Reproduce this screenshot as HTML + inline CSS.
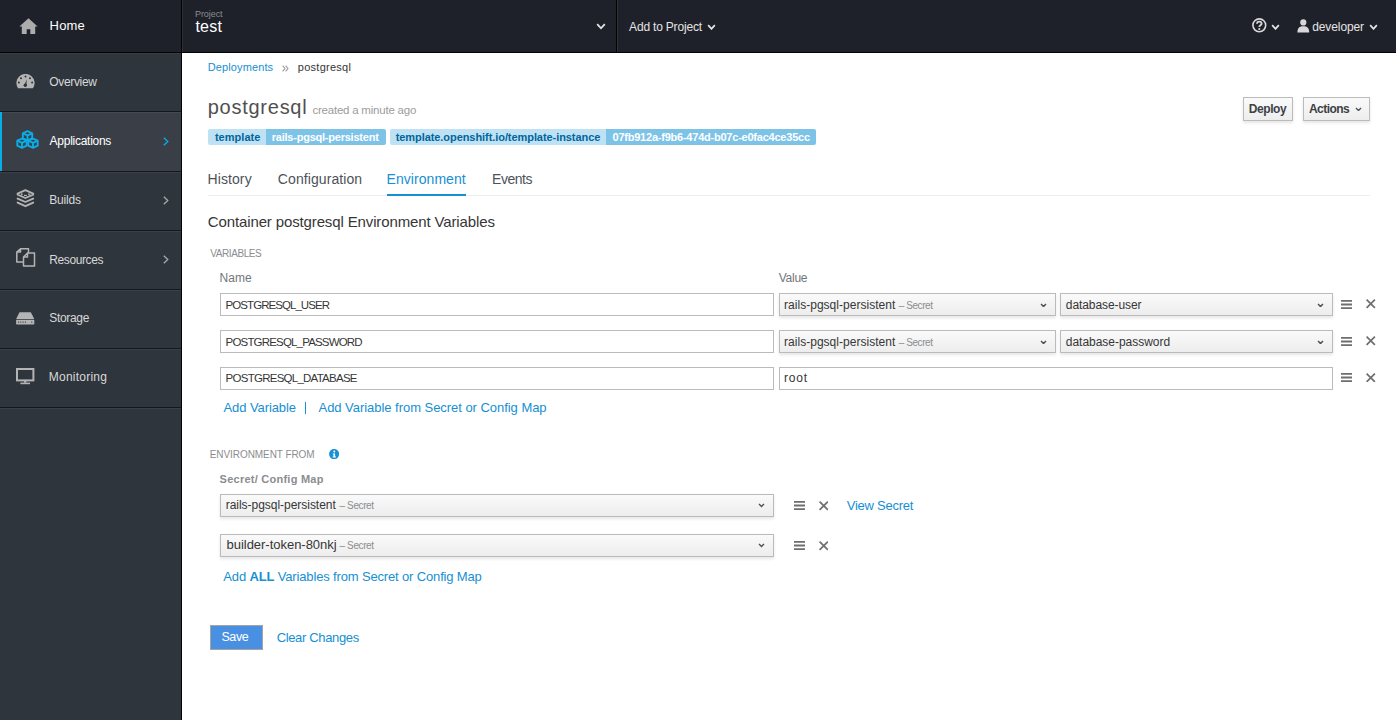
<!DOCTYPE html>
<html><head><meta charset="utf-8"><title>postgresql</title>
<style>
html,body{margin:0;padding:0}
body{width:1396px;height:720px;overflow:hidden;position:relative;background:#fff;font-family:"Liberation Sans",sans-serif}
.b{position:absolute;display:block}
.t{position:absolute;white-space:nowrap;line-height:1;font-family:"Liberation Sans",sans-serif}
.t b{font-weight:bold}
</style></head><body>
<div class="b" style="left:0;top:0;width:1396px;height:52px;background:#1e2129"></div>
<div class="b" style="left:0;top:52px;width:1396px;height:1px;background:#030303"></div>
<div class="b" style="left:181px;top:0;width:1px;height:720px;background:#030303"></div>
<div class="b" style="left:616px;top:0;width:1px;height:52px;background:#030303"></div>
<div class="b" style="left:617px;top:0;width:1px;height:52px;background:#2f3237"></div>
<div class="b" style="left:182px;top:0;width:1px;height:52px;background:#2d3035"></div>
<svg class="b" style="left:19px;top:18px" width="19" height="17" viewBox="0 0 19 17"><path d="M9.5 0.3 L18.6 8.6 L16.2 8.6 L16.2 16 L11.3 16 L11.3 11.2 L7.7 11.2 L7.7 16 L2.8 16 L2.8 8.6 L0.4 8.6 Z" fill="#acacac"/></svg>
<div class="t" style="left:49.60px;top:19.00px;font-size:13px;letter-spacing:0.158px;color:#ffffff;">Home</div>
<div class="t" style="left:194.95px;top:9.88px;font-size:9px;letter-spacing:-0.058px;color:#8b8d8f;">Project</div>
<div class="t" style="left:195.45px;top:18.66px;font-size:16px;letter-spacing:0.233px;color:#ffffff;">test</div>
<svg class="b" style="left:595.5px;top:23px" width="10" height="6.5" viewBox="0 0 10 6.5"><path d="M1.2 1.2 L5.0 5.3 L8.799999999999999 1.2" fill="none" stroke="#e6e6e6" stroke-width="1.8"/></svg>
<div class="t" style="left:629.10px;top:20.84px;font-size:12px;letter-spacing:-0.188px;color:#e4e4e4;">Add to Project</div>
<svg class="b" style="left:707px;top:23.5px" width="9" height="6" viewBox="0 0 9 6"><path d="M1.15 1.15 L4.5 4.8500000000000005 L7.8500000000000005 1.15" fill="none" stroke="#e6e6e6" stroke-width="1.7"/></svg>
<svg class="b" style="left:1252px;top:18px" width="15" height="15" viewBox="0 0 15 15"><circle cx="7.3" cy="7.3" r="6.4" fill="none" stroke="#d8d8d8" stroke-width="1.6"/><path d="M5 5.7 C5 3 9.6 3 9.6 5.7 C9.6 7.3 7.3 7.2 7.3 8.9" fill="none" stroke="#d8d8d8" stroke-width="1.8"/><circle cx="7.3" cy="11" r="1.1" fill="#d8d8d8"/></svg>
<svg class="b" style="left:1271px;top:24px" width="9" height="6" viewBox="0 0 9 6"><path d="M1.15 1.15 L4.5 4.8500000000000005 L7.8500000000000005 1.15" fill="none" stroke="#e6e6e6" stroke-width="1.7"/></svg>
<svg class="b" style="left:1297px;top:18.5px" width="13" height="14" viewBox="0 0 13 14"><circle cx="6.3" cy="3.4" r="3.1" fill="#d8d8d8"/><path d="M0.4 13.6 C0.4 8.7 2.6 7.2 6.3 7.2 C10 7.2 12.2 8.7 12.2 13.6 Z" fill="#d8d8d8"/></svg>
<div class="t" style="left:1312.20px;top:20.84px;font-size:12px;letter-spacing:-0.100px;color:#e4e4e4;">developer</div>
<svg class="b" style="left:1369px;top:24px" width="9" height="6" viewBox="0 0 9 6"><path d="M1.15 1.15 L4.5 4.8500000000000005 L7.8500000000000005 1.15" fill="none" stroke="#e6e6e6" stroke-width="1.7"/></svg>
<div class="b" style="left:0;top:53px;width:181px;height:667px;background:#2f353c"></div>
<div class="b" style="left:0;top:53px;width:181px;height:1px;background:#383d44"></div>
<div class="b" style="left:0;top:111.0px;width:181px;height:1px;background:#15181b"></div>
<div class="b" style="left:0;top:112.0px;width:181px;height:1px;background:#3b4047"></div>
<div class="b" style="left:0;top:170.6px;width:181px;height:1px;background:#15181b"></div>
<div class="b" style="left:0;top:171.6px;width:181px;height:1px;background:#3b4047"></div>
<div class="b" style="left:0;top:229.8px;width:181px;height:1px;background:#15181b"></div>
<div class="b" style="left:0;top:230.8px;width:181px;height:1px;background:#3b4047"></div>
<div class="b" style="left:0;top:289.0px;width:181px;height:1px;background:#15181b"></div>
<div class="b" style="left:0;top:290.0px;width:181px;height:1px;background:#3b4047"></div>
<div class="b" style="left:0;top:348.2px;width:181px;height:1px;background:#15181b"></div>
<div class="b" style="left:0;top:349.2px;width:181px;height:1px;background:#3b4047"></div>
<div class="b" style="left:0;top:407.4px;width:181px;height:1px;background:#15181b"></div>
<div class="b" style="left:0;top:408.4px;width:181px;height:1px;background:#3b4047"></div>
<div class="b" style="left:0;top:112px;width:181px;height:58.6px;background:#3a3f47"></div>
<div class="b" style="left:0;top:112px;width:181px;height:1px;background:#444a52"></div>
<div class="b" style="left:0;top:112px;width:2px;height:58.6px;background:#0aaee6"></div>
<svg class="b" style="left:16px;top:73.5px" width="19" height="15" viewBox="0 0 19 15"><path d="M2.1 14.3 A9.1 9.1 0 1 1 16.9 14.3 Z" fill="#b4b4b4"/><circle cx="9.5" cy="2.6" r="1" fill="#2f353c"/><circle cx="5" cy="4.3" r="1" fill="#2f353c"/><circle cx="14" cy="4.3" r="1" fill="#2f353c"/><circle cx="2.9" cy="8.6" r="1" fill="#2f353c"/><circle cx="16.1" cy="8.6" r="1" fill="#2f353c"/><circle cx="9.3" cy="11.2" r="1.7" fill="#2f353c"/><path d="M8.4 10.9 L10.9 5.2 L10.2 11.5 Z" fill="#2f353c"/></svg>
<div class="t" style="left:49.30px;top:76.34px;font-size:12px;letter-spacing:-0.346px;color:#d8d8d8;">Overview</div>
<svg class="b" style="left:15.5px;top:130px" width="23" height="19" viewBox="0 0 23 19"><g fill="none" stroke="#0aaee6" stroke-width="1.9" stroke-linejoin="round"><path d="M11.5 1.2 L16.2 3.3 L16.2 8.3 L11.5 10.4 L6.8 8.3 L6.8 3.3 Z"/><path d="M6.8 3.3 L11.5 5.4 L16.2 3.3 M11.5 5.4 L11.5 10.4"/><path d="M6 8.6 L10.7 10.7 L10.7 15.7 L6 17.8 L1.3 15.7 L1.3 10.7 Z"/><path d="M1.3 10.7 L6 12.8 L10.7 10.7 M6 12.8 L6 17.8"/><path d="M17 8.6 L21.7 10.7 L21.7 15.7 L17 17.8 L12.3 15.7 L12.3 10.7 Z"/><path d="M12.3 10.7 L17 12.8 L21.7 10.7 M17 12.8 L17 17.8"/></g></svg>
<div class="t" style="left:49.60px;top:134.84px;font-size:12px;letter-spacing:-0.270px;color:#ffffff;">Applications</div>
<svg class="b" style="left:162.5px;top:136.5px" width="6" height="9" viewBox="0 0 6 9"><path d="M0.8 0.7 L4.8 4.5 L0.8 8.3" fill="none" stroke="#0aaee6" stroke-width="1.3"/></svg>
<svg class="b" style="left:15.5px;top:189px" width="19" height="19" viewBox="0 0 19 19"><g fill="none" stroke="#b4b4b4" stroke-width="1.9" stroke-linejoin="round" stroke-linecap="round"><path d="M9.4 1.2 L17.2 4.6 L17.2 5.6 L9.4 9 L1.6 5.6 L1.6 4.6 Z"/><path d="M1.6 9.6 L9.4 13 L17.2 9.6"/><path d="M1.6 13.6 L9.4 17.2 L17.2 13.6"/></g><circle cx="5.8" cy="5.2" r="0.9" fill="#b4b4b4"/><circle cx="13" cy="5.2" r="0.9" fill="#b4b4b4"/><path d="M8 6.4 L10.8 6.4" stroke="#b4b4b4" stroke-width="1.2"/></svg>
<div class="t" style="left:49.20px;top:193.74px;font-size:12px;letter-spacing:-0.170px;color:#d8d8d8;">Builds</div>
<svg class="b" style="left:162.5px;top:196px" width="6" height="9" viewBox="0 0 6 9"><path d="M0.8 0.7 L4.8 4.5 L0.8 8.3" fill="none" stroke="#a8a8a8" stroke-width="1.3"/></svg>
<svg class="b" style="left:15.5px;top:248px" width="20" height="19" viewBox="0 0 20 19"><g fill="none" stroke="#b4b4b4" stroke-width="1.5" stroke-linejoin="round"><path d="M7.5 14 L0.8 14 L0.8 4 L4.5 0.8 L12.5 0.8 L12.5 5 M0.8 4 L4.5 4 L4.5 0.8"/><path d="M7.5 9 L11.5 5 L18.5 5 L18.5 18 L7.5 18 Z M7.5 9 L11.5 9 L11.5 5"/></g></svg>
<div class="t" style="left:49.20px;top:253.54px;font-size:12px;letter-spacing:-0.375px;color:#d8d8d8;">Resources</div>
<svg class="b" style="left:162.5px;top:255px" width="6" height="9" viewBox="0 0 6 9"><path d="M0.8 0.7 L4.8 4.5 L0.8 8.3" fill="none" stroke="#a8a8a8" stroke-width="1.3"/></svg>
<svg class="b" style="left:16px;top:311.5px" width="19" height="13" viewBox="0 0 19 13"><path d="M3.5 0.3 L14.8 0.3 L18.3 7.1 L0.1 7.1 Z" fill="#b4b4b4"/><rect x="0.1" y="7.8" width="18.2" height="4.6" rx="0.6" fill="#b4b4b4"/><g fill="#2f353c"><circle cx="2.5" cy="10.1" r="0.7"/><circle cx="4.8" cy="10.1" r="0.7"/><circle cx="7.1" cy="10.1" r="0.7"/><circle cx="9.4" cy="10.1" r="0.7"/><circle cx="15.8" cy="10.1" r="0.7"/></g></svg>
<div class="t" style="left:49.30px;top:311.84px;font-size:12px;letter-spacing:-0.333px;color:#d8d8d8;">Storage</div>
<svg class="b" style="left:16px;top:368px" width="19" height="17" viewBox="0 0 19 17"><rect x="1" y="1" width="16.4" height="11.4" fill="none" stroke="#b4b4b4" stroke-width="2"/><rect x="8" y="12.5" width="2.4" height="2.2" fill="#b4b4b4"/><rect x="4.4" y="14.6" width="9.6" height="1.6" fill="#b4b4b4"/></svg>
<div class="t" style="left:48.80px;top:370.54px;font-size:12px;letter-spacing:0.228px;color:#d8d8d8;">Monitoring</div>
<div class="t" style="left:207.72px;top:62.29px;font-size:11px;letter-spacing:0.120px;color:#168fd3;">Deployments</div>
<svg class="b" style="left:281.5px;top:64.5px" width="7" height="7" viewBox="0 0 7 7"><path d="M0.6 0.6 L3 3.5 L0.6 6.4 M3.6 0.6 L6 3.5 L3.6 6.4" fill="none" stroke="#9a9a9a" stroke-width="1.1"/></svg>
<div class="t" style="left:297.85px;top:62.29px;font-size:11px;letter-spacing:0.250px;color:#363636;">postgresql</div>
<div class="t" style="left:207.75px;top:97.47px;font-size:20px;letter-spacing:0.739px;color:#505050;">postgresql</div>
<div class="t" style="left:312.40px;top:104.67px;font-size:11.5px;letter-spacing:-0.216px;color:#9c9c9c;">created a minute ago</div>
<div class="b" style="left:208.3px;top:129px;width:57.69999999999999px;height:16px;background:#bee1f4;border-radius:2px 0 0 2px"></div><div class="b" style="left:266px;top:129px;width:119.5px;height:16px;background:#7dc3e8;border-radius:0 2px 2px 0"></div><div class="t" style="left:214.88px;top:131.99px;font-size:11px;letter-spacing:0.036px;color:#00659c;font-weight:bold;">template</div><div class="t" style="left:271.75px;top:131.99px;font-size:11px;letter-spacing:-0.229px;color:#ffffff;font-weight:bold;">rails-pgsql-persistent</div>
<div class="b" style="left:389.5px;top:129px;width:216.5px;height:16px;background:#bee1f4;border-radius:2px 0 0 2px"></div><div class="b" style="left:606px;top:129px;width:209.79999999999995px;height:16px;background:#7dc3e8;border-radius:0 2px 2px 0"></div><div class="t" style="left:395.68px;top:131.99px;font-size:11px;letter-spacing:-0.067px;color:#00659c;font-weight:bold;">template.openshift.io/template-instance</div><div class="t" style="left:612.52px;top:131.99px;font-size:11px;letter-spacing:-0.227px;color:#ffffff;font-weight:bold;">07fb912a-f9b6-474d-b07c-e0fac4ce35cc</div>
<div class="b" style="left:1243px;top:97px;width:50px;height:24px;background:linear-gradient(#fafafa,#ededed);border:1px solid #bbbbbb;box-shadow:0 2px 3px rgba(3,3,3,0.10);box-sizing:border-box;"></div>
<div class="t" style="left:1248.75px;top:102.94px;font-size:12px;letter-spacing:-0.410px;color:#3d4146;font-weight:bold;">Deploy</div>
<div class="b" style="left:1303px;top:97px;width:67px;height:24px;background:linear-gradient(#fafafa,#ededed);border:1px solid #bbbbbb;box-shadow:0 2px 3px rgba(3,3,3,0.10);box-sizing:border-box;"></div>
<div class="t" style="left:1308.95px;top:102.94px;font-size:12px;letter-spacing:-0.546px;color:#3d4146;font-weight:bold;">Actions</div>
<svg class="b" style="left:1354.5px;top:106.5px" width="7" height="4.5" viewBox="0 0 7 4.5"><path d="M0.95 0.95 L3.5 3.5500000000000003 L6.05 0.95" fill="none" stroke="#4d5258" stroke-width="1.3"/></svg>
<div class="b" style="left:208px;top:195px;width:1162px;height:1px;background:#ededed"></div>
<div class="t" style="left:207.47px;top:172.25px;font-size:14px;letter-spacing:0.100px;color:#4d5258;">History</div>
<div class="t" style="left:277.85px;top:172.25px;font-size:14px;letter-spacing:0.081px;color:#4d5258;">Configuration</div>
<div class="t" style="left:386.57px;top:172.25px;font-size:14px;letter-spacing:0.053px;color:#168fd3;">Environment</div>
<div class="t" style="left:492.07px;top:172.25px;font-size:14px;letter-spacing:-0.485px;color:#4d5258;">Events</div>
<div class="b" style="left:387px;top:194px;width:79px;height:2px;background:#168fd3"></div>
<div class="t" style="left:207.85px;top:214.40px;font-size:15px;letter-spacing:-0.130px;color:#363636;">Container postgresql Environment Variables</div>
<div class="t" style="left:210.30px;top:248.73px;font-size:10px;letter-spacing:-0.422px;color:#8b8d8f;">VARIABLES</div>
<div class="t" style="left:219.40px;top:272.24px;font-size:12px;letter-spacing:0.100px;color:#72767b;">Name</div>
<div class="t" style="left:778.67px;top:272.04px;font-size:12px;letter-spacing:-0.231px;color:#72767b;">Value</div>
<div class="b" style="left:220px;top:293px;width:554px;height:23px;background:#fff;border:1px solid #bbbbbb;box-sizing:border-box;"></div>
<div class="t" style="left:225.62px;top:299.67px;font-size:11.5px;letter-spacing:-0.945px;color:#363636;">POSTGRESQL_USER</div>
<div class="b" style="left:779px;top:293px;width:277px;height:23px;background:linear-gradient(#fafafa,#ededed);border:1px solid #bbbbbb;box-shadow:0 2px 3px rgba(3,3,3,0.10);box-sizing:border-box;"></div>
<div class="t" style="left:784.05px;top:298.84px;font-size:12px;letter-spacing:0.025px;color:#363636;">rails-pgsql-persistent</div>
<div class="t" style="left:898.70px;top:300.54px;font-size:10px;letter-spacing:-0.421px;color:#8b8d8f;">– Secret</div>
<svg class="b" style="left:1039.5px;top:302.5px" width="7" height="4.6" viewBox="0 0 7 4.6"><path d="M1.025 1.025 L3.5 3.5749999999999997 L5.9750000000000005 1.025" fill="none" stroke="#4d5258" stroke-width="1.45"/></svg>
<div class="b" style="left:1060px;top:293px;width:273px;height:23px;background:linear-gradient(#fafafa,#ededed);border:1px solid #bbbbbb;box-shadow:0 2px 3px rgba(3,3,3,0.10);box-sizing:border-box;"></div>
<div class="t" style="left:1065.80px;top:298.84px;font-size:12px;letter-spacing:-0.083px;color:#363636;">database-user</div>
<svg class="b" style="left:1317px;top:302.5px" width="7" height="4.6" viewBox="0 0 7 4.6"><path d="M1.025 1.025 L3.5 3.5749999999999997 L5.9750000000000005 1.025" fill="none" stroke="#4d5258" stroke-width="1.45"/></svg>
<svg class="b" style="left:1341.2px;top:299.5px" width="11" height="9" viewBox="0 0 11 9"><path d="M0 0.8 H11 M0 4.5 H11 M0 8.2 H11" stroke="#6e6e6e" stroke-width="1.8"/></svg>
<svg class="b" style="left:1366px;top:299px" width="9.5" height="9.5" viewBox="0 0 9.5 9.5"><path d="M0.6 0.6 L8.9 8.9 M8.9 0.6 L0.6 8.9" stroke="#6e6e6e" stroke-width="1.7"/></svg>
<div class="b" style="left:220px;top:330px;width:554px;height:23px;background:#fff;border:1px solid #bbbbbb;box-sizing:border-box;"></div>
<div class="t" style="left:225.62px;top:336.67px;font-size:11.5px;letter-spacing:-0.828px;color:#363636;">POSTGRESQL_PASSWORD</div>
<div class="b" style="left:779px;top:330px;width:277px;height:23px;background:linear-gradient(#fafafa,#ededed);border:1px solid #bbbbbb;box-shadow:0 2px 3px rgba(3,3,3,0.10);box-sizing:border-box;"></div>
<div class="t" style="left:784.05px;top:335.84px;font-size:12px;letter-spacing:0.025px;color:#363636;">rails-pgsql-persistent</div>
<div class="t" style="left:898.70px;top:337.54px;font-size:10px;letter-spacing:-0.421px;color:#8b8d8f;">– Secret</div>
<svg class="b" style="left:1039.5px;top:339.5px" width="7" height="4.6" viewBox="0 0 7 4.6"><path d="M1.025 1.025 L3.5 3.5749999999999997 L5.9750000000000005 1.025" fill="none" stroke="#4d5258" stroke-width="1.45"/></svg>
<div class="b" style="left:1060px;top:330px;width:273px;height:23px;background:linear-gradient(#fafafa,#ededed);border:1px solid #bbbbbb;box-shadow:0 2px 3px rgba(3,3,3,0.10);box-sizing:border-box;"></div>
<div class="t" style="left:1065.80px;top:335.84px;font-size:12px;letter-spacing:-0.023px;color:#363636;">database-password</div>
<svg class="b" style="left:1317px;top:339.5px" width="7" height="4.6" viewBox="0 0 7 4.6"><path d="M1.025 1.025 L3.5 3.5749999999999997 L5.9750000000000005 1.025" fill="none" stroke="#4d5258" stroke-width="1.45"/></svg>
<svg class="b" style="left:1341.2px;top:336.5px" width="11" height="9" viewBox="0 0 11 9"><path d="M0 0.8 H11 M0 4.5 H11 M0 8.2 H11" stroke="#6e6e6e" stroke-width="1.8"/></svg>
<svg class="b" style="left:1366px;top:336px" width="9.5" height="9.5" viewBox="0 0 9.5 9.5"><path d="M0.6 0.6 L8.9 8.9 M8.9 0.6 L0.6 8.9" stroke="#6e6e6e" stroke-width="1.7"/></svg>
<div class="b" style="left:220px;top:366.5px;width:554px;height:23px;background:#fff;border:1px solid #bbbbbb;box-sizing:border-box;"></div>
<div class="t" style="left:225.62px;top:373.17px;font-size:11.5px;letter-spacing:-0.744px;color:#363636;">POSTGRESQL_DATABASE</div>
<div class="b" style="left:779px;top:366.5px;width:554px;height:23px;background:#fff;border:1px solid #bbbbbb;box-sizing:border-box;"></div>
<div class="t" style="left:784.05px;top:372.34px;font-size:12px;letter-spacing:0.775px;color:#363636;">root</div>
<svg class="b" style="left:1341.2px;top:373.0px" width="11" height="9" viewBox="0 0 11 9"><path d="M0 0.8 H11 M0 4.5 H11 M0 8.2 H11" stroke="#6e6e6e" stroke-width="1.8"/></svg>
<svg class="b" style="left:1366px;top:372.5px" width="9.5" height="9.5" viewBox="0 0 9.5 9.5"><path d="M0.6 0.6 L8.9 8.9 M8.9 0.6 L0.6 8.9" stroke="#6e6e6e" stroke-width="1.7"/></svg>
<div class="t" style="left:223.50px;top:401.00px;font-size:13px;letter-spacing:-0.089px;color:#168fd3;">Add Variable</div>
<div class="b" style="left:305px;top:402px;width:1px;height:12px;background:#168fd3"></div>
<div class="t" style="left:318.50px;top:401.00px;font-size:13px;letter-spacing:-0.039px;color:#168fd3;">Add Variable from Secret or Config Map</div>
<div class="t" style="left:209.75px;top:449.54px;font-size:10px;letter-spacing:-0.072px;color:#8b8d8f;">ENVIRONMENT FROM</div>
<svg class="b" style="left:329px;top:448.5px" width="10.5" height="10.5" viewBox="0 0 10.5 10.5"><circle cx="5.1" cy="5.1" r="5" fill="#168fd3"/><circle cx="5.3" cy="2.6" r="1" fill="#fff"/><path d="M3.6 4.4 H6.1 V7.6 H7 V8.5 H3.6 V7.6 H4.4 V5.3 H3.6 Z" fill="#fff"/></svg>
<div class="t" style="left:219.62px;top:473.79px;font-size:11px;letter-spacing:0.244px;color:#8b8d8f;font-weight:bold;">Secret/ Config Map</div>
<div class="b" style="left:220px;top:494px;width:554px;height:23px;background:linear-gradient(#fafafa,#ededed);border:1px solid #bbbbbb;box-shadow:0 2px 3px rgba(3,3,3,0.10);box-sizing:border-box;"></div>
<div class="t" style="left:225.75px;top:498.94px;font-size:12px;letter-spacing:-0.032px;color:#363636;">rails-pgsql-persistent</div>
<div class="t" style="left:339.60px;top:500.64px;font-size:10px;letter-spacing:-0.407px;color:#8b8d8f;">– Secret</div>
<svg class="b" style="left:757.5px;top:503px" width="7" height="4.6" viewBox="0 0 7 4.6"><path d="M1.025 1.025 L3.5 3.5749999999999997 L5.9750000000000005 1.025" fill="none" stroke="#4d5258" stroke-width="1.45"/></svg>
<svg class="b" style="left:794px;top:501.3px" width="11.3" height="9" viewBox="0 0 11.3 9"><path d="M0 0.8 H11.3 M0 4.5 H11.3 M0 8.2 H11.3" stroke="#6e6e6e" stroke-width="1.8"/></svg>
<svg class="b" style="left:818.7px;top:501px" width="9.5" height="9.5" viewBox="0 0 9.5 9.5"><path d="M0.6 0.6 L8.9 8.9 M8.9 0.6 L0.6 8.9" stroke="#6e6e6e" stroke-width="1.7"/></svg>
<div class="b" style="left:220px;top:534px;width:554px;height:23px;background:linear-gradient(#fafafa,#ededed);border:1px solid #bbbbbb;box-shadow:0 2px 3px rgba(3,3,3,0.10);box-sizing:border-box;"></div>
<div class="t" style="left:226.53px;top:538.10px;font-size:13px;letter-spacing:-0.025px;color:#363636;">builder-token-80nkj</div>
<div class="t" style="left:339.60px;top:540.63px;font-size:10px;letter-spacing:-0.407px;color:#8b8d8f;">– Secret</div>
<svg class="b" style="left:757.5px;top:543px" width="7" height="4.6" viewBox="0 0 7 4.6"><path d="M1.025 1.025 L3.5 3.5749999999999997 L5.9750000000000005 1.025" fill="none" stroke="#4d5258" stroke-width="1.45"/></svg>
<svg class="b" style="left:794px;top:541.3px" width="11.3" height="9" viewBox="0 0 11.3 9"><path d="M0 0.8 H11.3 M0 4.5 H11.3 M0 8.2 H11.3" stroke="#6e6e6e" stroke-width="1.8"/></svg>
<svg class="b" style="left:818.7px;top:541px" width="9.5" height="9.5" viewBox="0 0 9.5 9.5"><path d="M0.6 0.6 L8.9 8.9 M8.9 0.6 L0.6 8.9" stroke="#6e6e6e" stroke-width="1.7"/></svg>
<div class="t" style="left:846.77px;top:499.00px;font-size:13px;letter-spacing:-0.248px;color:#168fd3;">View Secret</div>
<div class="t" style="left:223.30px;top:570.20px;font-size:13px;letter-spacing:-0.152px;color:#168fd3">Add <b>ALL</b> Variables from Secret or Config Map</div>
<div class="b" style="left:210px;top:625px;width:53px;height:25px;background:#4a90e2;border:1px solid #a4a4a4;box-sizing:border-box"></div>
<div class="t" style="left:221.38px;top:631.32px;font-size:12.5px;letter-spacing:-0.350px;color:#ffffff;">Save</div>
<div class="t" style="left:276.68px;top:630.90px;font-size:13px;letter-spacing:-0.352px;color:#168fd3;">Clear Changes</div>
</body></html>
